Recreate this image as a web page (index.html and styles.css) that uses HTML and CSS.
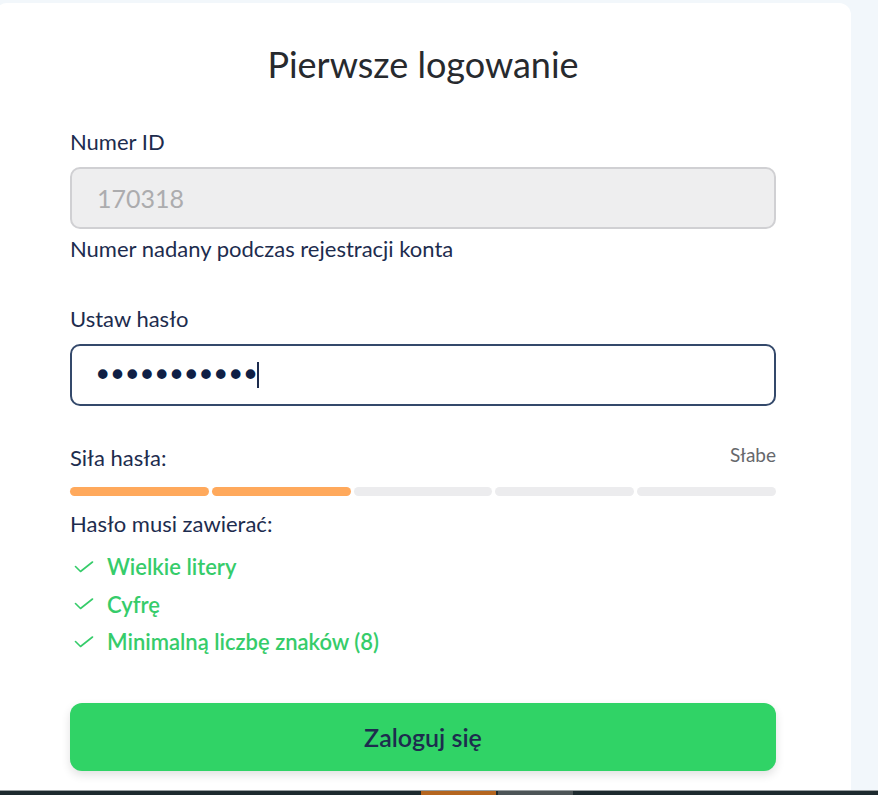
FILE: index.html
```html
<!DOCTYPE html>
<html lang="pl">
<head>
<meta charset="utf-8">
<title>Pierwsze logowanie</title>
<link rel="stylesheet" href="styles.css">
</head>
<body>
<div class="screen">
  <main class="card">
    <h1 class="title">Pierwsze logowanie</h1>

    <label class="label label-id">Numer ID</label>
    <div class="field field-disabled">170318</div>
    <p class="help">Numer nadany podczas rejestracji konta</p>

    <label class="label label-pass">Ustaw hasło</label>
    <div class="field field-active"><span class="dots">•••••••••••</span><span class="caret"></span></div>

    <div class="strength-row">
      <span class="strength-label">Siła hasła:</span>
      <span class="strength-value">Słabe</span>
    </div>
    <div class="bar">
      <span class="seg on"></span>
      <span class="seg on"></span>
      <span class="seg"></span>
      <span class="seg"></span>
      <span class="seg"></span>
    </div>

    <p class="req-title">Hasło musi zawierać:</p>
    <ul class="reqs">
      <li class="req"><svg class="check" viewBox="0 0 20 12" width="20" height="12"><path d="M1.5 5.5 L6.5 10.5 L18.5 1"/></svg><span>Wielkie litery</span></li>
      <li class="req"><svg class="check" viewBox="0 0 20 12" width="20" height="12"><path d="M1.5 5.5 L6.5 10.5 L18.5 1"/></svg><span>Cyfrę</span></li>
      <li class="req"><svg class="check" viewBox="0 0 20 12" width="20" height="12"><path d="M1.5 5.5 L6.5 10.5 L18.5 1"/></svg><span>Minimalną liczbę znaków (8)</span></li>
    </ul>

    <button class="btn" type="button">Zaloguj się</button>
  </main>
</div>
<div class="taskbar">
  <span class="tb-fill"></span>
  <span class="tb-app active"></span>
  <span class="tb-app grey"></span>
  <span class="tb-fill"></span>
</div>
</body>
</html>
```

FILE: styles.css
```css
* { box-sizing: border-box; }

html, body {
  margin: 0;
  padding: 0;
}

body {
  background: #f2f7fb;
  font-family: Lato, "Open Sans", "Liberation Sans", sans-serif;
  color: #1d2c4e;
  width: 878px;
  height: 795px;
  overflow: hidden;
}

.screen {
  height: 790px;
  padding-top: 3px;
  overflow: hidden;
}

.card {
  width: 856px;
  margin-left: -5px;
  height: 800px;
  background: #ffffff;
  border-radius: 12px;
  padding: 39px 75px 0 75px;
  display: flex;
  flex-direction: column;
}

.title {
  margin: 0;
  font-size: 36px;
  line-height: 44px;
  font-weight: 400;
  color: #272a2e;
  text-align: center;
}

.label {
  display: block;
  font-size: 22px;
  line-height: 24px;
  color: #1d2c4e;
}

.label-id { margin-top: 44px; }
.label-pass { margin-top: 46px; }

.field {
  margin-top: 13px;
  height: 62px;
  border-radius: 10px;
  display: flex;
  align-items: center;
  padding-left: 25px;
}

.field-disabled {
  background: #eeeeef;
  border: 2px solid #d0d0d3;
  color: #acacae;
  font-size: 25px;
}

.field-active {
  background: #ffffff;
  border: 2px solid #34496b;
  color: #0f1f45;
}

.dots {
  font-family: "DejaVu Sans", sans-serif;
  font-size: 33px;
  letter-spacing: -4.7px;
  line-height: 1;
  margin-left: -4px;
}

.caret {
  width: 2px;
  height: 26px;
  background: #1d2c4e;
  margin-left: 2px;
}

.help {
  margin: 8px 0 0;
  font-size: 22px;
  line-height: 24px;
  color: #1d2c4e;
}

.strength-row {
  margin-top: 40px;
  display: flex;
  justify-content: space-between;
  align-items: baseline;
}

.strength-label {
  font-size: 22px;
  line-height: 24px;
}

.strength-value {
  font-size: 19px;
  color: #66686c;
  position: relative;
  top: -4px;
}

.bar {
  margin-top: 17px;
  display: flex;
  gap: 3px;
  height: 9px;
}

.seg {
  flex: 1;
  background: #ececee;
  border-radius: 5px;
}

.seg.on { background: #ffa95c; }

.req-title {
  margin: 16px 0 0;
  font-size: 22px;
  line-height: 24px;
}

.reqs {
  list-style: none;
  margin: 12px 0 0;
  padding: 0;
}

.req {
  height: 37.5px;
  display: flex;
  align-items: center;
  color: #36cc6a;
  font-size: 22px;
  font-weight: 600;
}

.check {
  margin-left: 4px;
  margin-right: 13px;
  fill: none;
  stroke: #36cc6a;
  stroke-width: 1.6;
  stroke-linecap: round;
  stroke-linejoin: round;
}

.btn {
  margin-top: 42px;
  height: 68px;
  border: none;
  border-radius: 12px;
  background: #30d366;
  color: #1d2c4e;
  font-family: inherit;
  font-size: 25px;
  font-weight: 600;
  box-shadow: 0 4px 10px rgba(0, 0, 0, 0.12);
}

.taskbar {
  height: 5px;
  border-top: 1px solid #9aa0a2;
  background: #1d2a2e;
  display: flex;
}

.tb-fill { flex: 1; }
.tb-app { width: 75px; }
.tb-app.active { background: #b4651f; }
.tb-app.grey { background: #4d5557; margin-left: 2px; }
.tb-fill:first-child { flex: 0 0 421px; }
```
